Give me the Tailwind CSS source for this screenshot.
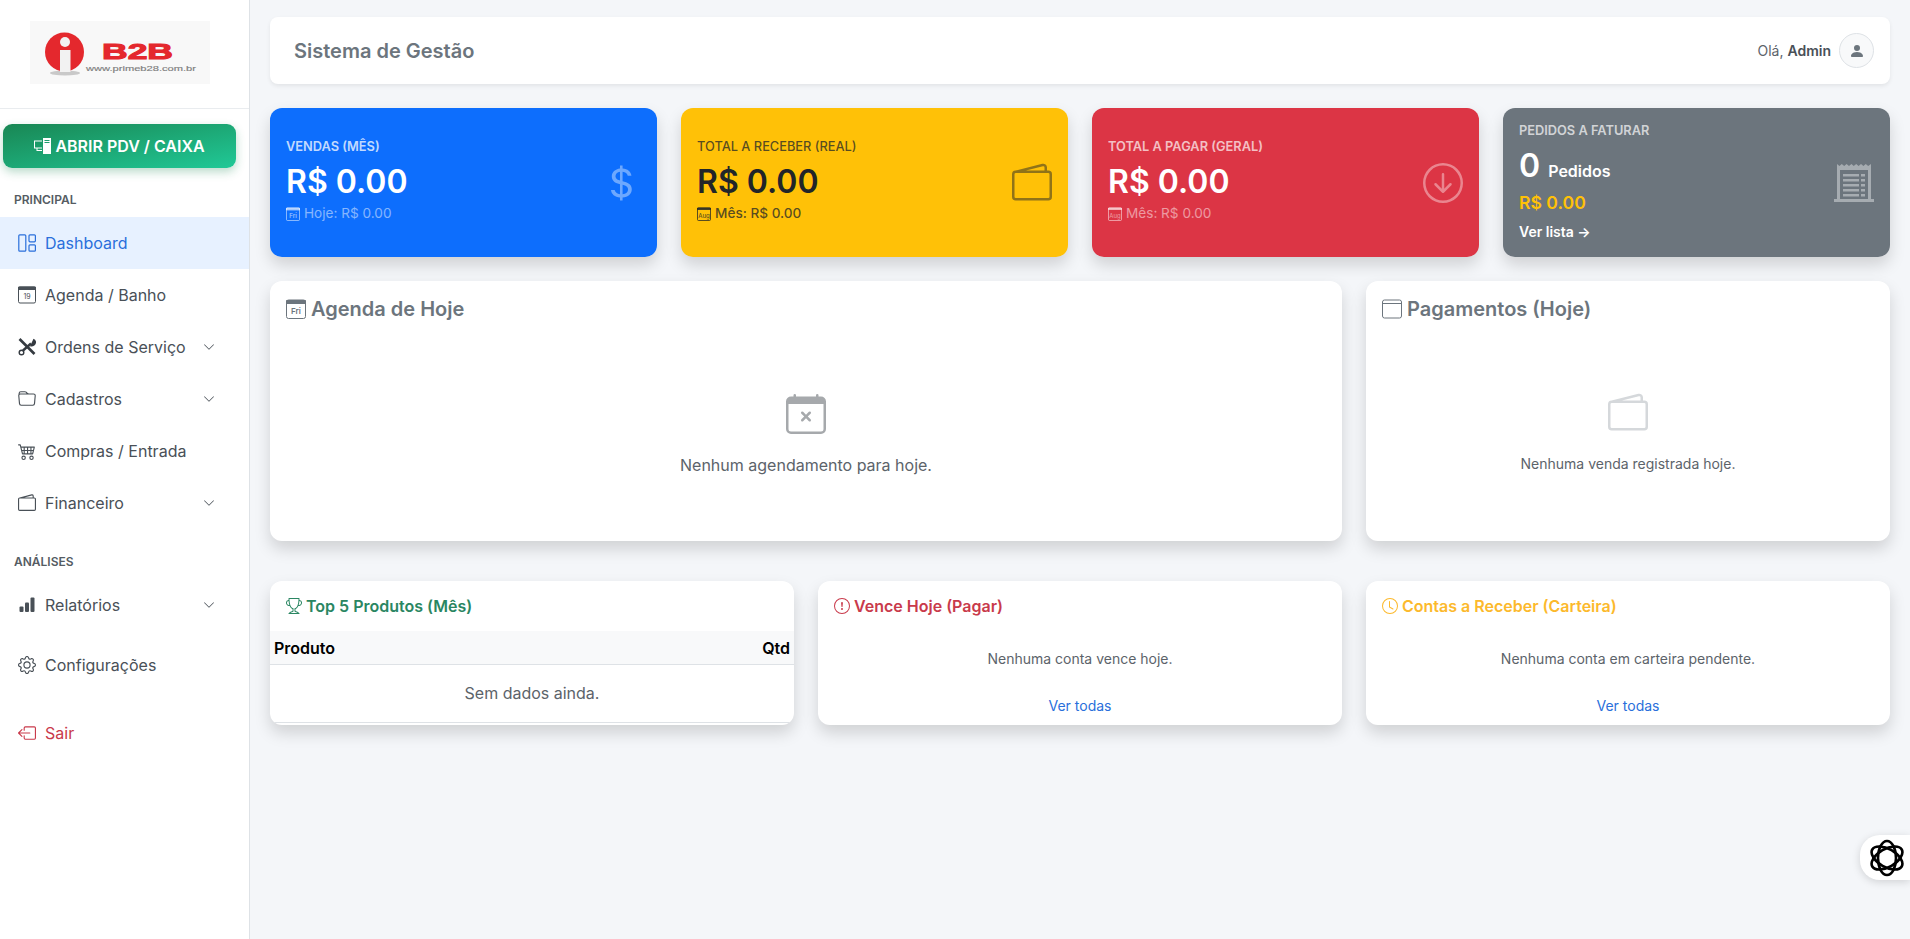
<!DOCTYPE html>
<html lang="pt-BR">
<head>
    <meta charset="UTF-8">
    <meta name="viewport" content="width=device-width, initial-scale=1.0">
    <title>Sistema de Gestão</title>
    <script src="https://cdn.jsdelivr.net/npm/@tailwindcss/browser@4"></script>
</head>
<body class="bg-[#f4f6f9] font-['Inter',sans-serif] text-[#212529] h-[939px] overflow-hidden">
<div class="flex h-[939px]">

    <!-- Sidebar -->
    <aside class="w-[250px] shrink-0 bg-white border-r border-[#dee2e6] flex flex-col">
        <div class="h-[109px] shrink-0 border-b border-[#e9ecef] pl-[30px] pt-[21px]">
            <svg width="180" height="63" viewBox="0 0 180 63" class="bg-[#f8f8f8]">
                <ellipse cx="35" cy="52" rx="15" ry="2.5" fill="#c9c9c9"/>
                <circle cx="34.5" cy="31" r="19.5" fill="#e4282d"/>
                <circle cx="35" cy="21" r="5" fill="#f2f2f2"/>
                <rect x="30" y="29" width="10.5" height="22" fill="#f2f2f2"/>
                <text x="72" y="38" font-family="Liberation Sans" font-weight="700" font-size="22" fill="#e4282d" stroke="#e4282d" textLength="71" lengthAdjust="spacingAndGlyphs">B2B</text>
                <text x="56" y="50" font-family="Liberation Sans" font-size="7.5" fill="#808080" stroke="#808080" stroke-width=".15" textLength="110" lengthAdjust="spacingAndGlyphs">www.primeb28.com.br</text>
            </svg>
        </div>

        <button class="mt-[15px] ml-[3px] w-[233px] h-[44px] shrink-0 rounded-[9px] bg-linear-to-br from-[#198754] to-[#20c997] text-white font-semibold text-[16px] flex items-center justify-center gap-1 shadow-[0_4px_10px_rgba(25,135,84,0.3)]">
            <svg width="17" height="16" viewBox="0 0 17 16" fill="white"><path d="M0 2.5h8v1H1v6h7v1H3.5v1.5H8v1H2.5v-2.5H0z"/><path d="M9 0h8v16H9z"/><path d="M10.5 2h5v1h-5zm0 2h5v1h-5z" fill="#1f9d6e"/></svg>
            ABRIR PDV / CAIXA
        </button>

        <p class="mt-[24px] ml-[14px] text-[12px] leading-[15px] font-semibold text-[#555c63]">PRINCIPAL</p>

        <nav class="mt-[10px] flex flex-col text-[16px] text-[#495057]">
            <a class="h-[52px] flex items-center pl-[18px] gap-[9px] bg-[#e7f1ff] text-[#2a6fdb]">
                <svg width="18" height="18" viewBox="0 0 18 18" fill="none" stroke="currentColor" stroke-width="1.2"><rect x=".8" y=".8" width="7" height="16.4" rx="1"/><rect x="11" y=".8" width="6.4" height="7" rx="1"/><rect x="11" y="10.8" width="6.4" height="6.4" rx="1"/></svg>
                Dashboard
            </a>
            <a class="h-[52px] flex items-center pl-[18px] gap-[9px]">
                <svg width="18" height="18" viewBox="0 0 18 18" fill="none" stroke="currentColor"><rect x=".5" y="1" width="17" height="16" rx="1.5"/><path d="M.5 1h17v2.5H.5z" fill="currentColor"/><text x="9" y="13" text-anchor="middle" font-family="Inter" font-size="7" fill="currentColor" stroke="none">19</text></svg>
                Agenda / Banho
            </a>
            <a class="h-[52px] flex items-center pl-[18px] gap-[9px]">
                <svg width="18" height="18" viewBox="0 0 18 18" fill="none" stroke="#343a40"><path d="M1.5 1 L16.5 16" stroke-width="2.6"/><path d="M13 5.5 L5 12.5" stroke-width="2.4"/><circle cx="3.5" cy="14.5" r="2.3" stroke-width="1.4"/><path d="M18 3.5a4.500 4.500 0 0 1-6 4.800l1.500-3.300L15.500 .8a4.500 4.500 0 0 1 2.500 2.700z" fill="#343a40" stroke="none"/></svg>
                Ordens de Serviço
                <svg class="ml-auto mr-[34px]" width="12" height="12" viewBox="0 0 16 16" fill="currentColor"><path fill-rule="evenodd" d="M1.646 4.646a.5.5 0 0 1 .708 0L8 10.293l5.646-5.647a.5.5 0 0 1 .708.708l-6 6a.5.5 0 0 1-.708 0l-6-6a.5.5 0 0 1 0-.708"/></svg>
            </a>
            <a class="h-[52px] flex items-center pl-[18px] gap-[9px]">
                <svg width="18" height="18" viewBox="0 0 16 16" fill="currentColor"><path d="M.54 3.87.5 3a2 2 0 0 1 2-2h3.672a2 2 0 0 1 1.414.586l.828.828A2 2 0 0 0 9.828 3h3.982a2 2 0 0 1 1.992 2.181l-.637 7A2 2 0 0 1 13.174 14H2.826a2 2 0 0 1-1.991-1.819l-.637-7a2 2 0 0 1 .342-1.31zM2.19 4a1 1 0 0 0-.996 1.09l.637 7a1 1 0 0 0 .995.91h10.348a1 1 0 0 0 .995-.91l.637-7A1 1 0 0 0 13.81 4zm4.69-1.707A1 1 0 0 0 6.172 2H2.5a1 1 0 0 0-1 .981l.006.139q.323-.119.684-.12h5.396z"/></svg>
                Cadastros
                <svg class="ml-auto mr-[34px]" width="12" height="12" viewBox="0 0 16 16" fill="currentColor"><path fill-rule="evenodd" d="M1.646 4.646a.5.5 0 0 1 .708 0L8 10.293l5.646-5.647a.5.5 0 0 1 .708.708l-6 6a.5.5 0 0 1-.708 0l-6-6a.5.5 0 0 1 0-.708"/></svg>
            </a>
            <a class="h-[52px] flex items-center pl-[18px] gap-[9px]">
                <svg width="18" height="18" viewBox="0 0 16 16" fill="currentColor"><path d="M0 2.5A.5.5 0 0 1 .5 2H2a.5.5 0 0 1 .485.379L2.89 4H14.5a.5.5 0 0 1 .485.621l-1.5 6A.5.5 0 0 1 13 11H4a.5.5 0 0 1-.485-.379L1.61 3H.5a.5.5 0 0 1-.5-.5M3.14 5l.5 2H5V5zM6 5v2h2V5zm3 0v2h2V5zm3 0v2h1.36l.5-2zm1.11 3H12v2h.61zM11 8H9v2h2zM8 8H6v2h2zM5 8H3.89l.5 2H5zm0 5a1 1 0 1 0 0 2 1 1 0 0 0 0-2m-2 1a2 2 0 1 1 4 0 2 2 0 0 1-4 0m9-1a1 1 0 1 0 0 2 1 1 0 0 0 0-2m-2 1a2 2 0 1 1 4 0 2 2 0 0 1-4 0"/></svg>
                Compras / Entrada
            </a>
            <a class="h-[52px] flex items-center pl-[18px] gap-[9px]">
                <svg width="18" height="18" viewBox="0 0 16 16" fill="currentColor"><path d="M12.136.326A1.5 1.5 0 0 1 14 1.78V3h.5A1.5 1.5 0 0 1 16 4.5v9a1.5 1.5 0 0 1-1.5 1.5h-13A1.5 1.5 0 0 1 0 13.5v-9a1.5 1.5 0 0 1 1.432-1.499zM5.562 3H13V1.78a.5.5 0 0 0-.621-.484zM1.5 4a.5.5 0 0 0-.5.5v9a.5.5 0 0 0 .5.5h13a.5.5 0 0 0 .5-.5v-9a.5.5 0 0 0-.5-.5z"/></svg>
                Financeiro
                <svg class="ml-auto mr-[34px]" width="12" height="12" viewBox="0 0 16 16" fill="currentColor"><path fill-rule="evenodd" d="M1.646 4.646a.5.5 0 0 1 .708 0L8 10.293l5.646-5.647a.5.5 0 0 1 .708.708l-6 6a.5.5 0 0 1-.708 0l-6-6a.5.5 0 0 1 0-.708"/></svg>
            </a>
        </nav>

        <p class="mt-[25px] ml-[14px] text-[12px] leading-[15px] font-semibold text-[#555c63]">ANÁLISES</p>

        <nav class="mt-[10px] flex flex-col text-[16px] text-[#495057]">
            <a class="h-[52px] flex items-center pl-[18px] gap-[9px]">
                <svg width="18" height="18" viewBox="0 0 18 18" fill="currentColor"><rect x="1.5" y="10.5" width="4" height="5.5" rx="1"/><rect x="7" y="6.5" width="4" height="9.5" rx="1"/><rect x="12.5" y="1.5" width="4" height="14.5" rx="1"/></svg>
                Relatórios
                <svg class="ml-auto mr-[34px]" width="12" height="12" viewBox="0 0 16 16" fill="currentColor"><path fill-rule="evenodd" d="M1.646 4.646a.5.5 0 0 1 .708 0L8 10.293l5.646-5.647a.5.5 0 0 1 .708.708l-6 6a.5.5 0 0 1-.708 0l-6-6a.5.5 0 0 1 0-.708"/></svg>
            </a>
            <a class="mt-[8px] h-[52px] flex items-center pl-[18px] gap-[9px]">
                <svg width="18" height="18" viewBox="0 0 16 16" fill="currentColor"><path d="M8 4.754a3.246 3.246 0 1 0 0 6.492 3.246 3.246 0 0 0 0-6.492M5.754 8a2.246 2.246 0 1 1 4.492 0 2.246 2.246 0 0 1-4.492 0"/><path d="M9.796 1.343c-.527-1.79-3.065-1.79-3.592 0l-.094.319a.873.873 0 0 1-1.255.52l-.292-.16c-1.64-.892-3.433.902-2.54 2.541l.159.292a.873.873 0 0 1-.52 1.255l-.319.094c-1.79.527-1.79 3.065 0 3.592l.319.094a.873.873 0 0 1 .52 1.255l-.16.292c-.892 1.64.901 3.434 2.541 2.54l.292-.159a.873.873 0 0 1 1.255.52l.094.319c.527 1.79 3.065 1.79 3.592 0l.094-.319a.873.873 0 0 1 1.255-.52l.292.16c1.64.893 3.434-.902 2.54-2.541l-.159-.292a.873.873 0 0 1 .52-1.255l.319-.094c1.79-.527 1.79-3.065 0-3.592l-.319-.094a.873.873 0 0 1-.52-1.255l.16-.292c.893-1.64-.902-3.433-2.541-2.54l-.292.159a.873.873 0 0 1-1.255-.52zm-2.633.283c.246-.835 1.428-.835 1.674 0l.094.319a1.873 1.873 0 0 0 2.693 1.115l.291-.16c.764-.415 1.6.42 1.184 1.185l-.159.292a1.873 1.873 0 0 0 1.116 2.692l.318.094c.835.246.835 1.428 0 1.674l-.319.094a1.873 1.873 0 0 0-1.115 2.693l.16.291c.415.764-.42 1.6-1.185 1.184l-.291-.159a1.873 1.873 0 0 0-2.693 1.116l-.094.318c-.246.835-1.428.835-1.674 0l-.094-.319a1.873 1.873 0 0 0-2.692-1.115l-.292.16c-.764.415-1.6-.42-1.184-1.185l.159-.291A1.873 1.873 0 0 0 1.945 8.93l-.319-.094c-.835-.246-.835-1.428 0-1.674l.319-.094A1.873 1.873 0 0 0 3.06 4.377l-.16-.292c-.415-.764.42-1.6 1.185-1.184l.292.159a1.873 1.873 0 0 0 2.692-1.115z"/></svg>
                Configurações
            </a>
            <a class="mt-[16px] h-[52px] flex items-center pl-[18px] gap-[9px] text-[#c93a4b]">
                <svg width="18" height="18" viewBox="0 0 16 16" fill="currentColor"><path d="M6 12.5a.5.5 0 0 0 .5.5h8a.5.5 0 0 0 .5-.5v-9a.5.5 0 0 0-.5-.5h-8a.5.5 0 0 0-.5.5v2a.5.5 0 0 1-1 0v-2A1.5 1.5 0 0 1 6.5 2h8A1.5 1.5 0 0 1 16 3.5v9a1.5 1.5 0 0 1-1.5 1.5h-8A1.5 1.5 0 0 1 5 12.5v-2a.5.5 0 0 1 1 0z"/><path d="M.146 8.354a.5.5 0 0 1 0-.708l3-3a.5.5 0 1 1 .708.708L1.707 7.5H10.5a.5.5 0 0 1 0 1H1.707l2.147 2.146a.5.5 0 0 1-.708.708z"/></svg>
                Sair
            </a>
        </nav>
    </aside>

    <!-- Main -->
    <main class="flex-1 px-[20px] pt-[17px]">
        <header class="h-[67px] bg-white rounded-lg shadow-[0_2px_4px_rgba(0,0,0,0.075)] flex items-center justify-between pl-[24px] pr-[16px]">
            <h1 class="text-[20px] font-semibold text-[#6c757d]">Sistema de Gestão</h1>
            <div class="flex items-center gap-2 text-[14px] text-[#5c636a]">
                <span>Olá, <b class="font-semibold text-[#495057]">Admin</b></span>
                <div class="w-[35px] h-[35px] rounded-full bg-[#f8f9fa] border border-[#dee2e6] flex items-center justify-center">
                    <svg width="16" height="16" viewBox="0 0 16 16" fill="#6c757d"><path d="M3 14s-1 0-1-1 1-4 6-4 6 3 6 4-1 1-1 1zm5-6a3 3 0 1 0 0-6 3 3 0 0 0 0 6"/></svg>
                </div>
            </div>
        </header>

        <!-- Stat cards -->
        <section class="mt-[24px] grid grid-cols-4 gap-6 h-[149px]">
            <div class="bg-[#0d6efd] rounded-xl shadow-[0_8px_16px_rgba(0,0,0,0.15)] px-4 flex items-center justify-between text-white">
                <div class="mb-[4px]">
                    <p class="text-[12.8px] leading-[20px] font-semibold text-white/75">VENDAS (MÊS)</p>
                    <p class="mt-[6px] text-[32px] leading-[38px] font-semibold">R$ 0.00</p>
                    <p class="mt-[2px] text-[13.6px] leading-[21px] text-white/50 flex items-center gap-[4px]">
                        <svg width="14" height="14" viewBox="0 0 14 14" fill="none" stroke="currentColor"><rect x=".5" y="1" width="13" height="12.5" rx="1"/><path d="M.5 1h13v2h-13z" fill="currentColor"/><text x="7" y="10.8" text-anchor="middle" font-family="Inter" font-size="6" font-weight="700" fill="currentColor" stroke="none">Fri</text></svg>
                        Hoje: R$ 0.00
                    </p>
                </div>
                <svg class="text-white/40" width="40" height="40" viewBox="0 0 16 16" fill="currentColor"><path d="M4 10.781c.148 1.667 1.513 2.85 3.591 3.003V15h1.043v-1.216c2.27-.179 3.678-1.438 3.678-3.3 0-1.59-.947-2.51-2.956-3.028l-.722-.187V3.467c1.122.11 1.879.714 2.07 1.616h1.47c-.166-1.6-1.54-2.748-3.54-2.875V1H7.591v1.233c-1.939.23-3.27 1.472-3.27 3.156 0 1.454.966 2.483 2.661 2.917l.61.162v4.031c-1.149-.17-1.94-.8-2.131-1.718zm3.391-3.836c-1.043-.263-1.6-.825-1.6-1.616 0-.944.704-1.641 1.8-1.828v3.495l-.2-.05zm1.591 1.872c1.287.323 1.852.859 1.852 1.769 0 1.097-.826 1.828-2.2 1.939V8.73z"/></svg>
            </div>

            <div class="bg-[#ffc107] rounded-xl shadow-[0_8px_16px_rgba(0,0,0,0.15)] px-4 flex items-center justify-between text-[#212529]">
                <div class="mb-[4px]">
                    <p class="text-[12.8px] leading-[20px] font-medium text-[#212529]/75">TOTAL A RECEBER (REAL)</p>
                    <p class="mt-[6px] text-[32px] leading-[38px] font-semibold">R$ 0.00</p>
                    <p class="mt-[2px] text-[13.6px] leading-[21px] font-medium text-[#212529]/75 flex items-center gap-[4px]">
                        <svg width="14" height="14" viewBox="0 0 14 14" fill="none" stroke="currentColor"><rect x=".5" y="1" width="13" height="12.5" rx="1"/><path d="M.5 1h13v1.5h-13z" fill="currentColor"/><text x="7" y="10.5" text-anchor="middle" font-family="Inter" font-size="6" fill="currentColor" stroke="none">Aug</text></svg>
                        Mês: R$ 0.00
                    </p>
                </div>
                <svg class="text-[#212529]/50" width="40" height="40" viewBox="0 0 16 16" fill="currentColor"><path d="M12.136.326A1.5 1.5 0 0 1 14 1.78V3h.5A1.5 1.5 0 0 1 16 4.5v9a1.5 1.5 0 0 1-1.5 1.5h-13A1.5 1.5 0 0 1 0 13.5v-9a1.5 1.5 0 0 1 1.432-1.499zM5.562 3H13V1.78a.5.5 0 0 0-.621-.484zM1.5 4a.5.5 0 0 0-.5.5v9a.5.5 0 0 0 .5.5h13a.5.5 0 0 0 .5-.5v-9a.5.5 0 0 0-.5-.5z"/></svg>
            </div>

            <div class="bg-[#dc3545] rounded-xl shadow-[0_8px_16px_rgba(0,0,0,0.15)] px-4 flex items-center justify-between text-white">
                <div class="mb-[4px]">
                    <p class="text-[12.8px] leading-[20px] font-semibold text-white/70">TOTAL A PAGAR (GERAL)</p>
                    <p class="mt-[6px] text-[32px] leading-[38px] font-semibold">R$ 0.00</p>
                    <p class="mt-[2px] text-[13.6px] leading-[21px] text-white/50 flex items-center gap-[4px]">
                        <svg width="14" height="14" viewBox="0 0 14 14" fill="none" stroke="currentColor"><rect x=".5" y="1" width="13" height="12.5" rx="1"/><path d="M.5 1h13v1.5h-13z" fill="currentColor"/><text x="7" y="10.5" text-anchor="middle" font-family="Inter" font-size="6" fill="currentColor" stroke="none">Aug</text></svg>
                        Mês: R$ 0.00
                    </p>
                </div>
                <svg class="text-white/40" width="40" height="40" viewBox="0 0 16 16" fill="currentColor"><path fill-rule="evenodd" d="M1 8a7 7 0 1 0 14 0A7 7 0 0 0 1 8m15 0A8 8 0 1 1 0 8a8 8 0 0 1 16 0M8.5 4.5a.5.5 0 0 0-1 0v5.793L5.354 8.146a.5.5 0 1 0-.708.708l3 3a.5.5 0 0 0 .708 0l3-3a.5.5 0 0 0-.708-.708L8.5 10.293z"/></svg>
            </div>

            <div class="bg-[#6c757d] rounded-xl shadow-[0_8px_16px_rgba(0,0,0,0.15)] px-4 flex items-center justify-between text-white">
                <div class="mb-[2px]">
                    <p class="text-[12.8px] leading-[20px] font-semibold text-white/70">PEDIDOS A FATURAR</p>
                    <p class="mt-[6px] text-[32px] leading-[38px] font-semibold">0 <span class="text-[16px]">Pedidos</span></p>
                    <p class="text-[17.6px] leading-[26px] font-semibold text-[#ffc107]">R$ 0.00</p>
                    <p class="mt-[5px] text-[14px] leading-[21px] font-semibold">Ver lista →</p>
                </div>
                <svg class="text-white/40" width="40" height="40" viewBox="0 0 40 40" fill="currentColor"><path fill-rule="evenodd" d="M3 1l2.4 2L7.800 1l2.400 2 2.400-2 2.400 2 2.400-2 2.400 2 2.400-2 2.400 2 2.400-2 2.400 2 2.400-2 2.400 2L37 1v35h3v3H0v-3h3zm3 6v29h28V7z"/><path d="M9 11h16v2.500H9zm0 5h16v2.500H9zm0 5h16v2.500H9zm0 5h16v2.500H9zm0 5h16v2.500H9zm18-20h4v2.500h-4zm0 5h4v2.500h-4zm0 5h4v2.500h-4zm0 5h4v2.500h-4zm0 5h4v2.500h-4z"/></svg>
            </div>
        </section>

        <!-- Panels -->
        <section class="mt-[24px] grid grid-cols-12 gap-6 h-[260px]">
            <div class="col-span-8 bg-white rounded-xl shadow-[0_8px_16px_rgba(0,0,0,0.15)] flex flex-col px-4 pt-[16px]">
                <h2 class="text-[20px] leading-[24px] font-semibold text-[#6c757d] flex items-center gap-[5px]">
                    <svg width="20" height="20" viewBox="0 0 20 20" fill="none" stroke="currentColor"><rect x=".5" y="1" width="19" height="18.500" rx="2"/><path d="M.5 1.500h19v3H.5z" fill="currentColor"/><text x="10" y="15" text-anchor="middle" font-family="Inter" font-size="8" fill="currentColor" stroke="none">Fri</text></svg>
                    Agenda de Hoje
                </h2>
                <div class="mt-[73px] flex flex-col items-center text-[#5c636a]">
                    <svg class="text-[#a6a9ac]" width="40" height="40" viewBox="0 0 16 16" fill="currentColor"><path d="M3.5 0a.5.5 0 0 1 .5.5V1h8V.5a.5.5 0 0 1 1 0V1h1a2 2 0 0 1 2 2v11a2 2 0 0 1-2 2H2a2 2 0 0 1-2-2V3a2 2 0 0 1 2-2h1V.5a.5.5 0 0 1 .5-.5M1 4v10a1 1 0 0 0 1 1h12a1 1 0 0 0 1-1V4z"/><path d="M6.146 7.146a.5.5 0 0 1 .708 0L8 8.293l1.146-1.147a.5.5 0 1 1 .708.708L8.707 9l1.147 1.146a.5.5 0 0 1-.708.708L8 9.707l-1.146 1.147a.5.5 0 0 1-.708-.708L7.293 9 6.146 7.854a.5.5 0 0 1 0-.708"/></svg>
                    <p class="mt-[19px] text-[16px] leading-[24px]">Nenhum agendamento para hoje.</p>
                </div>
            </div>
            <div class="col-span-4 bg-white rounded-xl shadow-[0_8px_16px_rgba(0,0,0,0.15)] flex flex-col px-4 pt-[16px]">
                <h2 class="text-[20px] leading-[24px] font-semibold text-[#6c757d] flex items-center gap-[5px]">
                    <svg width="20" height="20" viewBox="0 0 20 20" fill="none" stroke="currentColor"><rect x=".5" y="1" width="19" height="18" rx="2"/><path d="M.5 4.500h19"/></svg>
                    Pagamentos (Hoje)
                </h2>
                <div class="mt-[72px] flex flex-col items-center text-[#5c636a]">
                    <svg class="text-[#d5d8db]" width="40" height="40" viewBox="0 0 16 16" fill="currentColor"><path d="M12.136.326A1.5 1.5 0 0 1 14 1.78V3h.5A1.5 1.5 0 0 1 16 4.5v9a1.5 1.5 0 0 1-1.5 1.5h-13A1.5 1.5 0 0 1 0 13.5v-9a1.5 1.5 0 0 1 1.432-1.499zM5.562 3H13V1.78a.5.5 0 0 0-.621-.484zM1.5 4a.5.5 0 0 0-.5.5v9a.5.5 0 0 0 .5.5h13a.5.5 0 0 0 .5-.5v-9a.5.5 0 0 0-.5-.5z"/></svg>
                    <p class="mt-[20px] text-[14px] leading-[21px]">Nenhuma venda registrada hoje.</p>
                </div>
            </div>
        </section>

        <!-- Bottom cards -->
        <section class="mt-[40px] grid grid-cols-3 gap-6 h-[144px]">
            <div class="bg-white rounded-xl shadow-[0_8px_16px_rgba(0,0,0,0.15)] overflow-hidden">
                <h3 class="h-[50px] pb-[1px] pl-[16px] text-[16px] font-semibold text-[#2a8662] flex items-center gap-1">
                    <svg width="16" height="16" viewBox="0 0 16 16" fill="currentColor"><path d="M2.5.5A.5.5 0 0 1 3 0h10a.5.5 0 0 1 .5.5q0 .807-.034 1.536a3 3 0 1 1-1.133 5.89c-.79 1.865-1.878 2.777-2.833 3.011v2.173l1.425.356c.194.048.377.135.537.255L13.3 15.1a.5.5 0 0 1-.3.9H3a.5.5 0 0 1-.3-.9l1.838-1.379c.16-.12.343-.207.537-.255L6.5 13.11v-2.173c-.955-.234-2.043-1.146-2.833-3.012a3 3 0 1 1-1.132-5.89A33 33 0 0 1 2.5.5m.099 2.54a2 2 0 0 0 .72 3.935c-.333-1.05-.588-2.346-.72-3.935m10.083 3.935a2 2 0 0 0 .72-3.935c-.133 1.59-.388 2.885-.72 3.935M3.504 1q.01.775.056 1.469c.13 2.028.457 3.546.87 4.667C5.294 9.48 6.484 10 7 10a.5.5 0 0 1 .5.5v2.61a1 1 0 0 1-.757.97l-1.426.356a.5.5 0 0 0-.179.085L4.5 15h7l-.638-.479a.5.5 0 0 0-.18-.085l-1.425-.356a1 1 0 0 1-.757-.97V10.5A.5.5 0 0 1 9 10c.516 0 1.706-.52 2.57-2.864.413-1.12.74-2.64.87-4.667q.045-.694.056-1.469z"/></svg>
                    Top 5 Produtos (Mês)
                </h3>
                <table class="w-full">
                    <thead>
                        <tr class="h-[33px] bg-[#f8f9fa] border-b border-[#dee2e6] text-[16px] text-black">
                            <th class="pl-1 pt-[2px] text-left font-semibold">Produto</th>
                            <th class="pr-1 pt-[2px] text-right font-semibold">Qtd</th>
                        </tr>
                    </thead>
                    <tbody>
                        <tr class="h-[58px] border-b border-[#dee2e6]">
                            <td colspan="2" class="text-center text-[16px] text-[#5c636a]">Sem dados ainda.</td>
                        </tr>
                    </tbody>
                </table>
            </div>

            <div class="bg-white rounded-xl shadow-[0_8px_16px_rgba(0,0,0,0.15)] flex flex-col items-center">
                <h3 class="self-start h-[50px] pb-[1px] pl-[16px] text-[16px] font-semibold text-[#c93a4b] flex items-center gap-1">
                    <svg width="16" height="16" viewBox="0 0 16 16" fill="currentColor"><path d="M8 15A7 7 0 1 1 8 1a7 7 0 0 1 0 14m0 1A8 8 0 1 0 8 0a8 8 0 0 0 0 16"/><path d="M7.002 11a1 1 0 1 1 2 0 1 1 0 0 1-2 0M7.1 4.995a.905.905 0 1 1 1.8 0l-.35 3.507a.552.552 0 0 1-1.1 0z"/></svg>
                    Vence Hoje (Pagar)
                </h3>
                <p class="mt-[17px] text-[14px] leading-[21px] text-[#5c636a]">Nenhuma conta vence hoje.</p>
                <a class="mt-[26px] text-[14px] leading-[21px] text-[#2a6fdb]">Ver todas</a>
            </div>

            <div class="bg-white rounded-xl shadow-[0_8px_16px_rgba(0,0,0,0.15)] flex flex-col items-center">
                <h3 class="self-start h-[50px] pb-[1px] pl-[16px] text-[16px] font-semibold text-[#fcb92c] flex items-center gap-1">
                    <svg width="16" height="16" viewBox="0 0 16 16" fill="currentColor"><path d="M8 3.5a.5.5 0 0 0-1 0V9a.5.5 0 0 0 .252.434l3.5 2a.5.5 0 0 0 .496-.868L8 8.71z"/><path d="M8 16A8 8 0 1 0 8 0a8 8 0 0 0 0 16m7-8A7 7 0 1 1 1 8a7 7 0 0 1 14 0"/></svg>
                    Contas a Receber (Carteira)
                </h3>
                <p class="mt-[17px] text-[14px] leading-[21px] text-[#5c636a]">Nenhuma conta em carteira pendente.</p>
                <a class="mt-[26px] text-[14px] leading-[21px] text-[#2a6fdb]">Ver todas</a>
            </div>
        </section>
    </main>
</div>

<!-- Floating widget -->
<div class="fixed right-0 top-[835px] w-[50px] h-[45px] bg-white rounded-l-[20px] shadow-[0_2px_8px_rgba(0,0,0,0.15)] flex items-center pl-[9px]">
    <svg width="36" height="38" viewBox="0 0 36 38" fill="none" stroke="black" stroke-width="2.6">
        <ellipse cx="18" cy="19" rx="9" ry="17"/>
        <ellipse cx="18" cy="19" rx="9" ry="17" transform="rotate(60 18 19)"/>
        <ellipse cx="18" cy="19" rx="9" ry="17" transform="rotate(120 18 19)"/>
    </svg>
</div>
</body>
</html>
